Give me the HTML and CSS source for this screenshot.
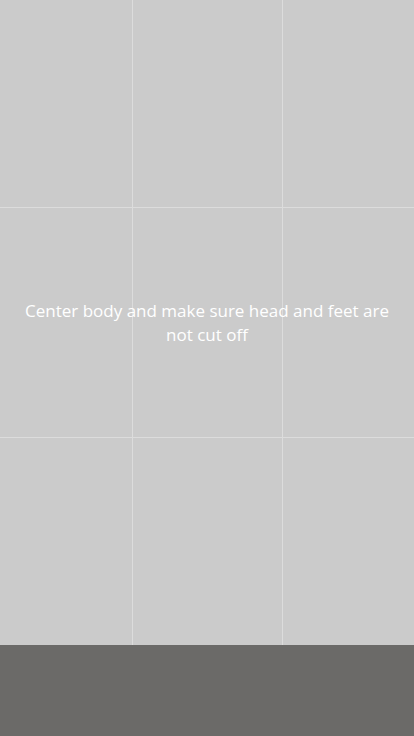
FILE: index.html
```html
<!DOCTYPE html>
<html>
<head>
<meta charset="utf-8">
<link rel="stylesheet" href="styles.css">
</head>
<body>
<div class="screen">
  <div class="viewfinder">
    <div class="grid">
      <div></div><div></div><div></div>
      <div></div><div></div><div></div>
      <div></div><div></div><div></div>
    </div>
    <p class="hint">Center body and make sure head and feet are not cut off</p>
  </div>
  <div class="toolbar"></div>
</div>
</body>
</html>
```
FILE: styles.css
```css
html, body {
  margin: 0;
  padding: 0;
}
body {
  width: 414px;
  height: 736px;
  overflow: hidden;
  font-family: "Open Sans", "Noto Sans", sans-serif;
}
.screen {
  display: flex;
  flex-direction: column;
  height: 736px;
}
.viewfinder {
  position: relative;
  height: 645px;
  display: flex;
  align-items: center;
  justify-content: center;
}
.grid {
  position: absolute;
  inset: 0;
  display: grid;
  grid-template-columns: 132px 149px 1fr;
  grid-template-rows: 207px 229px 1fr;
  gap: 1px;
  background: #dcdcdc;
}
.grid div {
  background: #cbcbcb;
}
.hint {
  position: relative;
  margin: 0;
  padding: 0 22px;
  text-align: center;
  color: #ffffff;
  font-size: 17px;
  line-height: 24px;
}
.toolbar {
  flex: 1;
  background: #6b6a68;
}
```
